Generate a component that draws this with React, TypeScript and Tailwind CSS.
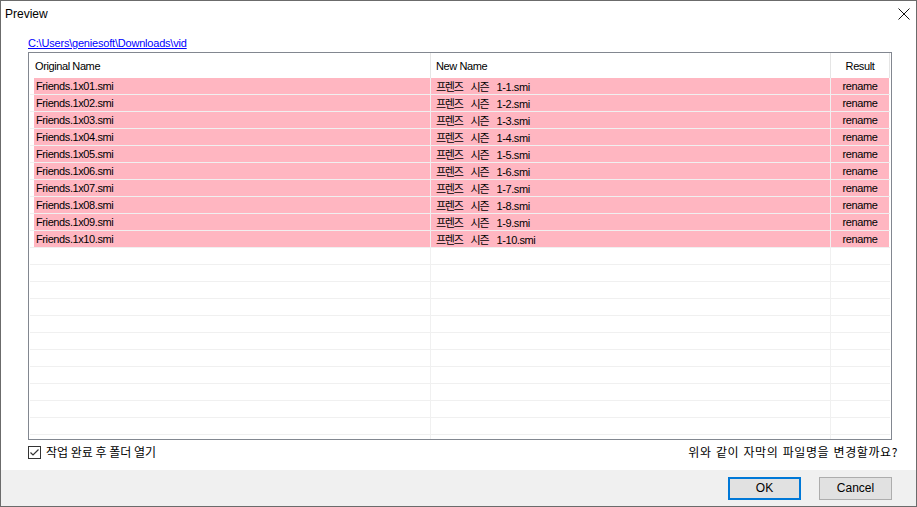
import React from "react";

const rows = Array.from({ length: 10 }, (_, i) => {
  const n = i + 1;
  const nn = n < 10 ? `0${n}` : `${n}`;
  return { orig: `Friends.1x${nn}.smi`, num: `1-${n}.smi` };
});

const latin = { fontFamily: '"Liberation Sans", "Noto Sans CJK KR", sans-serif' };
const kr = { fontFamily: '"Noto Sans CJK KR", "Liberation Sans", sans-serif' };

export default function App() {
  return (
    <div
      className="w-[917px] h-[507px] border border-[#6b6b6b] bg-white flex flex-col overflow-hidden text-black"
      style={latin}
    >
      {/* Title bar */}
      <div className="h-[35px] shrink-0 flex items-start justify-between">
        <div className="pl-[4px] pt-[5px] text-[12px] leading-[16px]">Preview</div>
        <div className="pr-[6px] pt-[7px]">
          <svg width="12" height="12" viewBox="0 0 12 12">
            <path d="M0.5 0.5 L11.5 11.5 M11.5 0.5 L0.5 11.5" stroke="#111" strokeWidth="1" fill="none" />
          </svg>
        </div>
      </div>

      {/* Link */}
      <div className="px-[27px] h-[14px] shrink-0 text-[11px] leading-[14px]">
        <span className="text-[#0000ff] underline tracking-[-0.2px]">C:\Users\geniesoft\Downloads\vid</span>
      </div>

      {/* Table */}
      <div className="px-[27px] pt-[2px] shrink-0">
        <div className="w-[864px] h-[388px] border border-[#828790] overflow-hidden bg-white text-[11px] tracking-[-0.4px]">
          {/* Header */}
          <div className="flex h-[25px]">
            <div className="w-[402px] border-r border-[#e5e5e5] pl-[6px] leading-[26px]">Original Name</div>
            <div className="w-[400px] border-r border-[#e5e5e5] pl-[5px] leading-[26px]">New Name</div>
            <div className="w-[59px] border-r border-[#e5e5e5] text-center leading-[26px]">Result</div>
          </div>
          {/* Rows */}
          <div className="flex flex-col">
            {rows.map((r) => (
              <div key={r.orig} className="flex w-[860px] ml-[1px] h-[17px] border-b border-[#f0f0f0]">
                <div className="w-[401px] border-r border-[#f0f0f0] pl-[4px] flex">
                  <div className="flex-1 bg-[#ffb6c1] pl-[2px] leading-[17px]">{r.orig}</div>
                </div>
                <div className="w-[400px] border-r border-[#f0f0f0] bg-[#ffb6c1] pl-[5px] leading-[17px] whitespace-pre">
                  <span className="text-[11px] tracking-[-1.3px] [word-spacing:7px]" style={kr}>
                    프렌즈 시즌{" "}
                  </span>
                  <span>{r.num}</span>
                </div>
                <div className="w-[58px] bg-[#ffb6c1] text-center leading-[17px]">rename</div>
              </div>
            ))}
            {Array.from({ length: 14 }, (_, i) => (
              <div key={i} className="flex w-[860px] ml-[1px] h-[17px] shrink-0 border-b border-[#f0f0f0]">
                <div className="w-[401px] border-r border-[#f0f0f0]" />
                <div className="w-[400px] border-r border-[#f0f0f0]" />
                <div className="w-[58px]" />
              </div>
            ))}
          </div>
        </div>
      </div>

      {/* Checkbox row */}
      <div className="h-[16px] mt-[4px] pl-[27px] pr-[18px] flex items-center justify-between shrink-0">
        <div className="flex items-center gap-[5px]">
          <div className="w-[13px] h-[13px] border border-[#333] bg-white flex items-center justify-center">
            <svg width="11" height="11" viewBox="0 0 11 11">
              <path d="M1.5 5.5 L4 8 L9.5 2.5" stroke="#333" strokeWidth="1.2" fill="none" />
            </svg>
          </div>
          <span className="text-[12px] leading-[16px]" style={kr}>
            작업 완료 후 폴더 열기
          </span>
        </div>
        <span className="text-[12px] leading-[16px] tracking-[0.6px] [word-spacing:1px]" style={kr}>
          위와 같이 자막의 파일명을 변경할까요?
        </span>
      </div>

      {/* Footer */}
      <div className="mt-[10px] flex-1 bg-[#f0f0f0] flex justify-end items-start pt-[7px] pr-[24px] gap-[18px]">
        <button className="w-[73px] h-[23px] border-2 border-[#0078d7] bg-[#e1e1e1] text-[12px] leading-[19px]">
          OK
        </button>
        <button className="w-[73px] h-[23px] border border-[#adadad] bg-[#e1e1e1] text-[12px] leading-[21px]">
          Cancel
        </button>
      </div>
    </div>
  );
}
